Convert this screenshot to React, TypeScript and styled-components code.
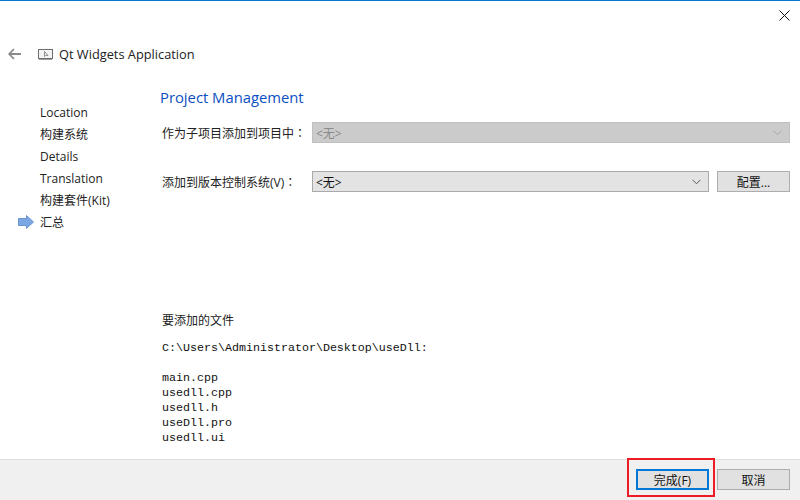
import React from 'react'
import styled, { createGlobalStyle } from 'styled-components'

const sans = `"Open Sans", "Noto Sans CJK SC", sans-serif`

const GlobalStyle = createGlobalStyle`
  html, body { margin: 0; padding: 0; background: #fff; }
  body { font-family: ${sans}; font-size: 12px; color: #1a1a1a; }
`

const Win = styled.div`
  width: 800px;
  height: 500px;
  box-sizing: border-box;
  border-top: 1px solid #0078d7;
  display: flex;
  flex-direction: column;
  overflow: hidden;
`

const TitleBar = styled.div`
  height: 29px;
  box-sizing: border-box;
  display: flex;
  justify-content: flex-end;
  align-items: flex-start;
  padding: 9px 10px 0 0;
`

const Header = styled.div`
  height: 48px;
  display: flex;
  align-items: center;
  gap: 6px;
  padding-left: 8px;
`

const BackButton = styled.span`
  display: flex;
  width: 24px;
`

const HeaderTitle = styled.span`
  font-size: 12.8px;
  color: #222;
`

const Body = styled.div`
  flex: 1;
  display: flex;
  min-height: 0;
`

const Sidebar = styled.div`
  width: 160px;
  padding-top: 23px;
  display: flex;
  flex-direction: column;
`

const Step = styled.div`
  height: 22px;
  display: flex;
  align-items: center;
  padding-left: 18px;
  color: #222;
  font-size: 12px;
`

const StepMark = styled.span`
  width: 22px;
  display: flex;
`

const Main = styled.div`
  flex: 1;
  padding: 9px 10px 0 0;
  display: flex;
  flex-direction: column;
`

const PageTitle = styled.div`
  font-size: 14.8px;
  line-height: 20px;
  color: #0b4fc2;
  margin-bottom: 15px;
`

const FormRow = styled.div<{ $gap: number }>`
  display: flex;
  align-items: center;
  gap: 8px;
  padding-left: 2px;
  margin-bottom: ${p => p.$gap}px;
`

const Label = styled.div`
  width: 142px;
  font-size: 12px;
  color: #222;
  white-space: nowrap;
`

/* the reference's fullwidth colon sits centred in its cell, as in the TC face */
const Colon = styled.span`
  font-family: "Noto Sans CJK TC", sans-serif;
`

const Combo = styled.div<{ $disabled?: boolean }>`
  flex: 1;
  height: 21px;
  box-sizing: border-box;
  display: flex;
  align-items: center;
  justify-content: space-between;
  padding: 0 7px 0 3px;
  font-size: 12px;
  background: ${p => (p.$disabled ? '#cbcbcb' : '#e3e3e3')};
  border: 1px solid ${p => (p.$disabled ? '#bfbfbf' : '#a9a9a9')};
  color: ${p => (p.$disabled ? '#8a8a8a' : '#111')};
`

const Button = styled.div<{ $primary?: boolean }>`
  width: 73px;
  height: 21px;
  box-sizing: border-box;
  display: flex;
  align-items: center;
  justify-content: center;
  font-size: 12px;
  color: #111;
  background: #e1e1e1;
  border: ${p => (p.$primary ? '2px solid #0078d7' : '1px solid #adadad')};
`

const FilesHeading = styled.div`
  margin-top: 120px;
  padding-left: 2px;
  font-size: 12px;
  line-height: 18px;
  color: #222;
`

const FileList = styled.pre`
  margin: 11px 0 0;
  padding-left: 2px;
  font-family: "Liberation Mono", monospace;
  font-size: 11.67px;
  line-height: 15px;
  color: #111;
`

const Footer = styled.div`
  height: 41px;
  box-sizing: border-box;
  background: #f0f0f0;
  border-top: 1px solid #dfdfdf;
  display: flex;
  justify-content: flex-end;
  align-items: flex-start;
  gap: 8px;
  padding: 9px 10px 0 0;
`

const Annotated = styled.div`
  position: relative;
  display: flex;
`

const RedBox = styled.div`
  position: absolute;
  left: -9px;
  top: -11px;
  width: 88px;
  height: 39px;
  box-sizing: border-box;
  border: 2px solid #ed1c24;
`

const CloseIcon = () => (
  <svg width="11" height="11" viewBox="0 0 11 11">
    <path d="M.5.5l10 10M10.5.5l-10 10" stroke="#111" strokeWidth="1" fill="none" />
  </svg>
)

const BackIcon = () => (
  <svg width="13" height="12" viewBox="0 0 13 12">
    <path d="M6 1L1.2 6 6 11M1.5 6H13" stroke="#8a8a8a" strokeWidth="1.8" fill="none" />
  </svg>
)

const AppIcon = () => (
  <svg width="15" height="13" viewBox="0 0 15 13">
    <rect x=".5" y="1.5" width="14" height="9" fill="#f4f4f4" stroke="#6d6d6d" />
    <path d="M1 11.5h13" stroke="#9a9a9a" />
    <path d="M6.5 3.5v5l1.3-1.2 2.2.2z" fill="none" stroke="#777" strokeWidth=".8" />
  </svg>
)

const StepArrow = () => (
  <svg width="16" height="14" viewBox="0 0 16 14">
    <path d="M.5 3.5h8V.5L15.5 7l-7 6.5v-3h-8z" fill="#7ba8e4" stroke="#5585c6" strokeWidth=".8" />
  </svg>
)

const Chevron = ({ color }: { color: string }) => (
  <svg width="9" height="6" viewBox="0 0 9 6">
    <path d="M.5.8l4 4 4-4" stroke={color} strokeWidth="1" fill="none" />
  </svg>
)

const steps = ['Location', '构建系统', 'Details', 'Translation', '构建套件(Kit)', '汇总']

const files = `C:\\Users\\Administrator\\Desktop\\useDll:

main.cpp
usedll.cpp
usedll.h
useDll.pro
usedll.ui`

export default function App() {
  return (
    <>
      <GlobalStyle />
      <Win>
        <TitleBar>
          <CloseIcon />
        </TitleBar>
        <Header>
          <BackButton>
            <BackIcon />
          </BackButton>
          <AppIcon />
          <HeaderTitle>Qt Widgets Application</HeaderTitle>
        </Header>
        <Body>
          <Sidebar>
            {steps.map((s, i) => (
              <Step key={s}>
                <StepMark>{i === steps.length - 1 && <StepArrow />}</StepMark>
                {s}
              </Step>
            ))}
          </Sidebar>
          <Main>
            <PageTitle>Project Management</PageTitle>
            <FormRow $gap={28}>
              <Label>作为子项目添加到项目中<Colon>：</Colon></Label>
              <Combo $disabled>
                &lt;无&gt;
                <Chevron color="#a8a8a8" />
              </Combo>
            </FormRow>
            <FormRow $gap={0}>
              <Label>添加到版本控制系统(V)<Colon>：</Colon></Label>
              <Combo>
                &lt;无&gt;
                <Chevron color="#555" />
              </Combo>
              <Button>配置...</Button>
            </FormRow>
            <FilesHeading>要添加的文件</FilesHeading>
            <FileList>{files}</FileList>
          </Main>
        </Body>
        <Footer>
          <Annotated>
            <Button $primary>完成(F)</Button>
            <RedBox />
          </Annotated>
          <Button>取消</Button>
        </Footer>
      </Win>
    </>
  )
}
